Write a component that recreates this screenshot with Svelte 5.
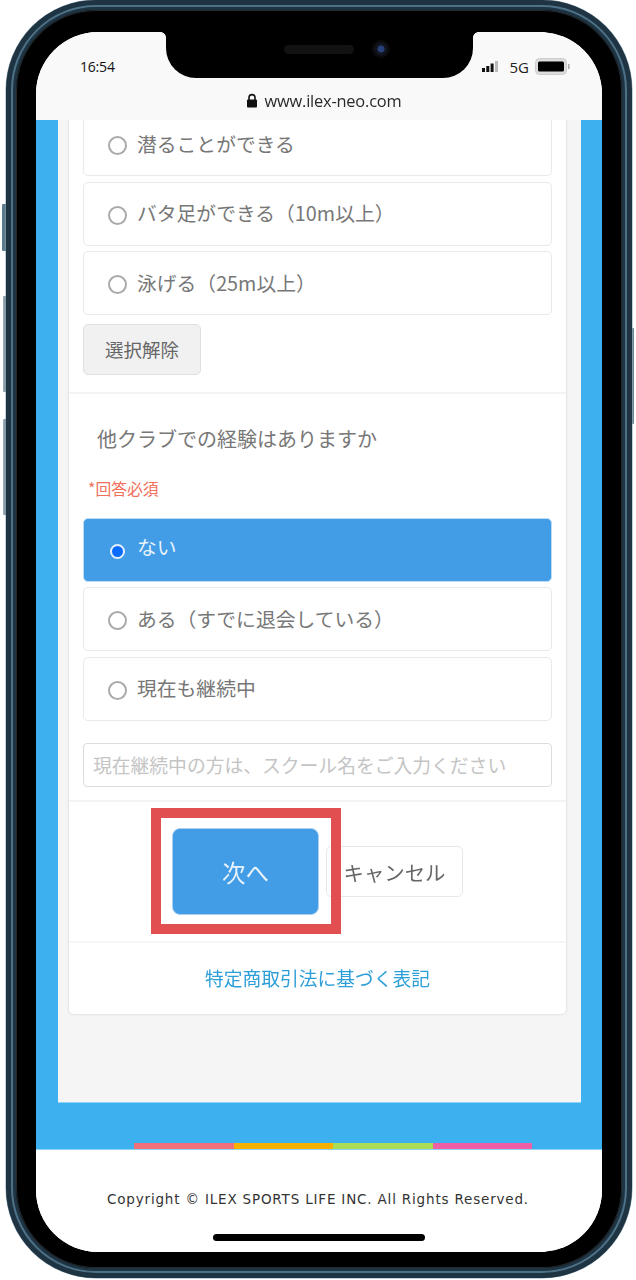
<script>
  const topRows = ['バタ足ができる（10m以上）', '泳げる（25m以上）'];
  const expRows = ['ある（すでに退会している）', '現在も継続中'];
  const strip = ['#f0707a', '#f5b000', '#aadd55', '#ee5fa5'];
</script>

<div class="page">
  <div class="side b1"></div>
  <div class="side b2"></div>
  <div class="side b3"></div>
  <div class="side r1"></div>
  <div class="phone">
    <div class="screen">
      <header class="browser">
        <div class="status">
          <span class="time">16:54</span>
          <div class="indicators">
            <svg width="16" height="11" viewBox="0 0 16 11" aria-hidden="true">
              <rect x="0" y="7" width="3" height="4" fill="#111" />
              <rect x="4.3" y="5" width="3" height="6" fill="#111" />
              <rect x="8.6" y="2.5" width="3" height="8.5" fill="#111" />
              <rect x="13" y="0" width="3" height="11" fill="#bbb" />
            </svg>
            <span class="net">5G</span>
            <svg width="35" height="17" viewBox="0 0 35 17" aria-hidden="true">
              <rect x="0.5" y="0.5" width="31" height="16" rx="4" fill="#ddd" stroke="#ccc" />
              <rect x="3" y="3.5" width="26" height="10" rx="1.5" fill="#000" />
              <rect x="33" y="6" width="1.5" height="5" fill="#aaa" />
            </svg>
          </div>
        </div>
        <div class="address">
          <svg width="12" height="15" viewBox="0 0 12 15" aria-hidden="true">
            <path d="M3 7V4.6a3 3 0 0 1 6 0V7" fill="none" stroke="#111" stroke-width="1.6" />
            <rect x="1" y="6.5" width="10" height="8" rx="1" fill="#111" />
          </svg>
          <span>www.ilex-neo.com</span>
        </div>
      </header>

      <main class="main">
        <div class="panel">
          <div class="card">
            <section class="block first">
              <div class="choice"><i class="radio"></i><span>潜ることができる</span></div>
              {#each topRows as label}
                <div class="choice"><i class="radio"></i><span>{label}</span></div>
              {/each}
              <button class="reset">選択解除</button>
            </section>

            <section class="block second">
              <h2>他クラブでの経験はありますか</h2>
              <p class="required">*回答必須</p>
              <div class="choice active"><i class="radio on"></i><span>ない</span></div>
              {#each expRows as label}
                <div class="choice"><i class="radio"></i><span>{label}</span></div>
              {/each}
              <input class="school" placeholder="現在継続中の方は、スクール名をご入力ください" />
            </section>

            <section class="actions">
              <button class="next">次へ</button>
              <button class="cancel">キャンセル</button>
            </section>

            <section class="legal">
              <span>特定商取引法に基づく表記</span>
            </section>
          </div>
        </div>
        <div class="strip">
          {#each strip as color}
            <span style="background:{color}"></span>
          {/each}
        </div>
      </main>

      <footer class="footer">
        <p>Copyright © ILEX SPORTS LIFE INC. All Rights Reserved.</p>
        <div class="home"></div>
      </footer>
    </div>

    <div class="notch">
      <span class="speaker"></span>
      <span class="camera"></span>
    </div>
    <div class="highlight"></div>
  </div>
</div>

<style>
  :global(body) {
    margin: 0;
    background: #fff;
  }
  .page {
    position: relative;
    width: 636px;
    height: 1280px;
    overflow: hidden;
    padding: 0 0 0 6px;
    box-sizing: border-box;
    font-family: "Noto Sans CJK JP", "Noto Sans", sans-serif;
    color: #777;
  }
  .side {
    position: absolute;
    background: linear-gradient(90deg, #a3b3bd, #5f7a89);
    border-radius: 1px;
  }
  .b1 { left: 2px; top: 204px; width: 5px; height: 47px; background: #5f7c8e; }
  .b2 { left: 3px; top: 296px; width: 4px; height: 96px; }
  .b3 { left: 3px; top: 419px; width: 4px; height: 96px; }
  .r1 { left: 631px; top: 328px; width: 3px; height: 96px; }
  .phone {
    position: relative;
    box-sizing: border-box;
    width: 626px;
    height: 1278px;
    border: 10px solid #1f3442;
    box-shadow:
      inset 0 0 0 1px #23282c,
      0 0 0 0.5px #8ba0ad;
    border-radius: 90px;
    background: #000;
    padding: 22px 0 0 20px;
  }
  .phone::before {
    content: "";
    position: absolute;
    inset: -5px;
    border: 2px solid #4d7187;
    border-radius: 85px;
  }
  .screen {
    display: flex;
    flex-direction: column;
    width: 566px;
    height: 1220px;
    border-radius: 62px;
    overflow: hidden;
    background: #fff;
    filter: blur(0.7px);
  }
  .browser {
    flex: none;
    height: 88px;
    background: #f9f9f9;
    box-sizing: border-box;
    padding: 24px 32px 0 44px;
  }
  .status {
    display: flex;
    justify-content: space-between;
    align-items: center;
    height: 20px;
    color: #111;
  }
  .time {
    font: 14px "Open Sans", sans-serif;
    letter-spacing: -0.2px;
  }
  .indicators {
    display: flex;
    align-items: center;
    gap: 6px;
  }
  .net {
    font: 15px "Open Sans", sans-serif;
    margin: 2px 0 0 6px;
    color: #222;
  }
  .address {
    display: flex;
    align-items: center;
    justify-content: center;
    gap: 7px;
    margin-top: 13px;
    padding-right: 3px;
    font: 16.4px "Open Sans", sans-serif;
    letter-spacing: -0.2px;
    color: #2a2a2a;
  }
  .main {
    flex: 1;
    display: flex;
    flex-direction: column;
    min-height: 0;
    overflow: hidden;
    background: #3db0f0;
    border-bottom: 1px solid #8fd3f7;
    padding: 0 21px 0 22px;
  }
  .panel {
    flex: 1;
    min-height: 0;
    background: #f5f5f5;
    border-bottom: 1px solid #8fd3f7;
    padding: 0 14px 0 10px;
  }
  .card {
    box-sizing: border-box;
    margin-top: -9px;
    background: #fff;
    border: 1px solid #e8e8e8;
    border-radius: 6px;
    box-shadow: 0 0 0 1px #f0f0f0;
  }
  .block {
    padding: 0 14px;
    border-bottom: 2px solid #f3f3f3;
  }
  .first {
    display: flex;
    flex-direction: column;
    gap: 5.5px;
    padding-bottom: 17px;
  }
  .choice {
    display: flex;
    align-items: center;
    gap: 10px;
    box-sizing: border-box;
    height: 64px;
    padding-left: 24px;
    border: 1px solid #e9e9e9;
    border-radius: 5px;
    background: #fff;
    font-size: 19.8px;
    color: #777;
  }
  .choice span {
    position: relative;
    top: -1px;
  }
  .radio {
    flex: none;
    width: 15px;
    height: 15px;
    margin-top: 3px;
    border: 2px solid #aaa;
    border-radius: 50%;
    background: #fff;
  }
  .radio.on {
    width: 11px;
    height: 11px;
    margin: 4px 2px 0 2px;
    border: 2px solid #e4f0ff;
    background: #0a6cff;
  }
  .choice.active {
    background: #429ce6;
    border-color: #bcdcf6;
    color: #e8f3fc;
  }
  .choice.active span {
    top: -3px;
  }
  .reset {
    align-self: flex-start;
    width: 118px;
    height: 51px;
    margin-top: 3px;
    padding: 0;
    border: 1px solid #e0e0e0;
    border-radius: 5px;
    background: #f1f1f1;
    font: 18.5px "Noto Sans CJK JP", sans-serif;
    color: #666;
  }
  .second {
    display: flex;
    flex-direction: column;
    gap: 5.5px;
    padding-bottom: 13px;
  }
  h2 {
    margin: 30px 0 0 14px;
    font-size: 20px;
    line-height: 30px;
    font-weight: 400;
    color: #777;
  }
  .required {
    margin: 20px 0 13px 5px;
    font-size: 15.8px;
    line-height: 20px;
    color: #f0705c;
  }
  .school {
    box-sizing: border-box;
    width: 100%;
    height: 44px;
    margin-top: 17px;
    padding: 0 0 2px 9px;
    border: 1px solid #ddd;
    border-radius: 4px;
    background: #fff;
    font: 18.8px "Noto Sans CJK JP", sans-serif;
  }
  .school::placeholder {
    color: #c4c4c4;
    opacity: 1;
  }
  .actions {
    display: flex;
    align-items: center;
    justify-content: center;
    gap: 7px;
    height: 141px;
    border-bottom: 2px solid #f6f6f6;
    box-sizing: border-box;
  }
  .next {
    width: 147px;
    height: 87px;
    padding: 0;
    border: 1px solid #a9d0f3;
    border-radius: 8px;
    background: #429ce6;
    font: 23.5px "Noto Sans CJK JP", sans-serif;
    color: #e8f3fc;
  }
  .cancel {
    width: 137px;
    height: 51px;
    padding: 0;
    border: 1px solid #e8e8e8;
    border-radius: 5px;
    background: #fff;
    font: 20.4px "Noto Sans CJK JP", sans-serif;
    color: #666;
  }
  .legal {
    display: flex;
    align-items: center;
    justify-content: center;
    height: 71px;
    padding-bottom: 2px;
    box-sizing: border-box;
    font-size: 18.75px;
    color: #2d9fd8;
  }
  .strip {
    flex: none;
    display: flex;
    height: 6px;
    margin: 40px 0 0 76px;
    width: 398px;
  }
  .strip span {
    flex: 1;
  }
  .footer {
    flex: none;
    height: 102px;
    box-sizing: border-box;
    padding-top: 39px;
    background: #fff;
  }
  .footer p {
    margin: 0;
    padding-right: 2px;
    text-align: center;
    font: 13.5px/20px "DejaVu Sans", sans-serif;
    color: #333;
    letter-spacing: 0.82px;
  }
  .home {
    width: 212px;
    height: 7px;
    margin: 25px auto 0;
    border-radius: 4px;
    background: #000;
  }
  .notch {
    position: absolute;
    left: 150px;
    top: 22px;
    width: 307px;
    height: 46px;
    background: #000;
    border-radius: 0 0 30px 30px;
  }
  .notch::before,
  .notch::after {
    content: "";
    position: absolute;
    top: 0;
    width: 5px;
    height: 5px;
  }
  .notch::before {
    left: -5px;
    background: radial-gradient(circle at 0 100%, transparent 4.5px, #000 5px);
  }
  .notch::after {
    right: -5px;
    background: radial-gradient(circle at 100% 100%, transparent 4.5px, #000 5px);
  }
  .speaker {
    position: absolute;
    left: 118px;
    top: 13px;
    width: 70px;
    height: 9px;
    border-radius: 5px;
    background: #121212;
  }
  .camera {
    position: absolute;
    left: 206px;
    top: 8px;
    width: 18px;
    height: 18px;
    border-radius: 50%;
    background: radial-gradient(circle, #27407a 0 3px, #10141f 4px 6px, #0a0a0c 7px);
  }
  .highlight {
    position: absolute;
    left: 135px;
    top: 798px;
    width: 170px;
    height: 106px;
    border: 10px solid #e14f50;
  }
</style>
